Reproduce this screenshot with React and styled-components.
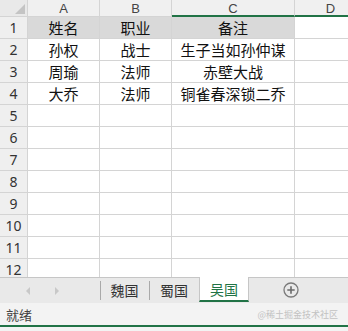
import React from "react";
import styled, { createGlobalStyle } from "styled-components";

const GlobalStyle = createGlobalStyle`
  html, body {
    margin: 0;
    padding: 0;
    overflow: hidden;
    background: #ffffff;
  }
  * {
    box-sizing: border-box;
  }
`;

const GREEN = "#217346";
const GRID = "#d4d4d4";
const FONT = `"Noto Sans CJK SC", "Liberation Sans", sans-serif`;

const Window = styled.div`
  width: 348px;
  height: 331px;
  display: flex;
  flex-direction: column;
  font-family: ${FONT};
  background: #f3f3f3;
`;

const Sheet = styled.div`
  height: 277px;
  overflow: hidden;
  background: #ffffff;
  display: grid;
  grid-template-columns: 28px 72px 72px 123px 72px;
  grid-template-rows: 17px;
  grid-auto-rows: 22px;
`;

const Corner = styled.div`
  position: relative;
  background: #e9e9e9;
  border-right: 1px solid ${GRID};
  border-bottom: 1px solid ${GRID};
  &::after {
    content: "";
    position: absolute;
    right: 2px;
    bottom: 2px;
    width: 0;
    height: 0;
    border-left: 10px solid transparent;
    border-bottom: 10px solid #c4c4c4;
  }
`;

const ColHead = styled.div`
  display: flex;
  align-items: center;
  justify-content: center;
  background: #f0f0f0;
  color: #444;
  font-family: "Liberation Sans", sans-serif;
  font-size: 13px;
  line-height: 1;
  padding-top: ${(p) => (p.selected ? "1px" : "0")};
  border-right: 1px solid ${GRID};
  border-bottom: ${(p) => (p.selected ? `2px solid ${GREEN}` : `1px solid ${GRID}`)};
`;

const RowHead = styled.div`
  display: flex;
  align-items: center;
  justify-content: center;
  background: #efefef;
  color: #333;
  font-family: "Noto Sans", "Liberation Sans", sans-serif;
  font-size: 14px;
  line-height: 1;
  border-right: 1px solid ${GRID};
  border-bottom: 1px solid ${GRID};
`;

const Cell = styled.div`
  display: flex;
  align-items: center;
  justify-content: center;
  white-space: nowrap;
  overflow: hidden;
  background: ${(p) => (p.fill ? "#d9d9d9" : "#ffffff")};
  color: #111;
  font-size: 15px;
  line-height: 1;
  border-right: 1px solid ${GRID};
  border-bottom: 1px solid ${GRID};
`;

const TabBar = styled.div`
  height: 26px;
  display: flex;
  align-items: stretch;
  background: #e9e9e9;
  border-top: 1px solid #c6c6c6;
`;

const Nav = styled.div`
  width: 100px;
  display: flex;
  align-items: center;
  padding-left: 26px;
  gap: 25px;
`;

const Arrow = styled.span`
  width: 0;
  height: 0;
  border-top: 4px solid transparent;
  border-bottom: 4px solid transparent;
  ${(p) =>
    p.dir === "left"
      ? "border-right: 4px solid #c8c8c8;"
      : "border-left: 4px solid #c8c8c8;"}
`;

const Tab = styled.div`
  position: relative;
  width: ${(p) => p.w}px;
  display: flex;
  align-items: center;
  justify-content: center;
  font-size: 14px;
  color: #333;
  padding-bottom: 2px;
  &::before {
    content: "";
    position: absolute;
    left: 0;
    top: 3px;
    bottom: 3px;
    border-left: 1px solid #a9a9a9;
  }
`;

const ActiveTab = styled.div`
  width: 50px;
  margin-top: -1px;
  height: 25px;
  display: flex;
  align-items: center;
  justify-content: center;
  background: #ffffff;
  color: ${GREEN};
  font-size: 14px;
  border-left: 1px solid #c6c6c6;
  border-right: 1px solid #c6c6c6;
  border-bottom: 2px solid ${GREEN};
`;

const AddButton = styled.div`
  width: 84px;
  display: flex;
  align-items: center;
  justify-content: center;
  padding-bottom: 2px;
`;

const StatusBar = styled.div`
  height: 24px;
  display: flex;
  align-items: center;
  justify-content: space-between;
  padding: 0 10px 0 6px;
  background: #f3f3f3;
  border-bottom: 2px solid ${GREEN};
`;

const Status = styled.span`
  font-size: 13px;
  color: #444;
`;

const Watermark = styled.span`
  font-size: 9px;
  color: #c2c2c2;
`;

const columns = ["A", "B", "C", "D"];

const data = [
  ["姓名", "职业", "备注"],
  ["孙权", "战士", "生子当如孙仲谋"],
  ["周瑜", "法师", "赤壁大战"],
  ["大乔", "法师", "铜雀春深锁二乔"],
];

const rows = Array.from({ length: 12 }, (_, i) => data[i] || ["", "", ""]);

const PlusIcon = () => (
  <svg width="16" height="16" viewBox="0 0 16 16">
    <circle cx="8" cy="8" r="7" fill="none" stroke="#7a7a7a" strokeWidth="1.3" />
    <path d="M8 4.3v7.4M4.3 8h7.4" stroke="#6a6a6a" strokeWidth="1.6" />
  </svg>
);

const App = () => {
  return (
    <>
      <GlobalStyle />
      <Window>
        <Sheet>
          <Corner />
          {columns.map((c) => (
            <ColHead key={c} selected={c === "C" || c === "D"}>
              {c}
            </ColHead>
          ))}
          {rows.map((row, i) => (
            <React.Fragment key={i}>
              <RowHead>{i + 1}</RowHead>
              {row.map((text, j) => (
                <Cell key={j} fill={i === 0}>
                  {text}
                </Cell>
              ))}
              <Cell />
            </React.Fragment>
          ))}
        </Sheet>

        <TabBar>
          <Nav>
            <Arrow dir="left" />
            <Arrow dir="right" />
          </Nav>
          <Tab w={49}>魏国</Tab>
          <Tab w={50}>蜀国</Tab>
          <ActiveTab>吴国</ActiveTab>
          <AddButton>
            <PlusIcon />
          </AddButton>
        </TabBar>

        <StatusBar>
          <Status>就绪</Status>
          <Watermark>@稀土掘金技术社区</Watermark>
        </StatusBar>
      </Window>
    </>
  );
};

export default App;
